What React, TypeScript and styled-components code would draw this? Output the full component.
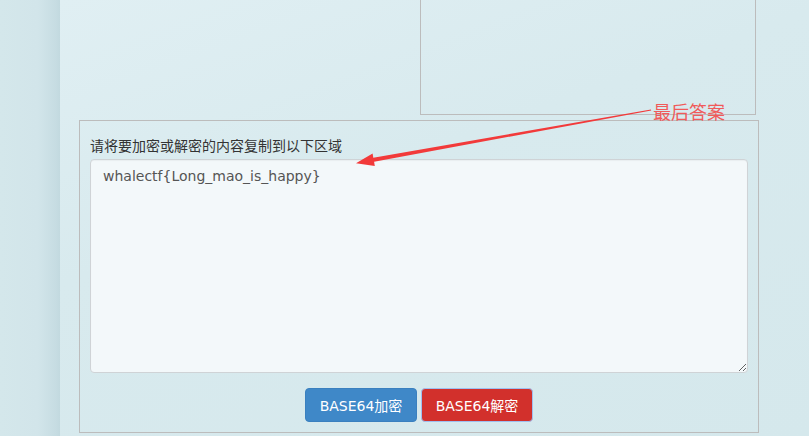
import React from 'react';
import styled, { createGlobalStyle } from 'styled-components';

const GlobalStyle = createGlobalStyle`
  html, body {
    margin: 0;
    padding: 0;
    background: #d4e7eb;
    font-family: "DejaVu Sans", "Noto Sans CJK SC", sans-serif;
    overflow: hidden;
  }
`;

const Page = styled.div`
  position: relative;
  display: flex;
  width: 809px;
  height: 436px;
  overflow: hidden;
`;

const Gutter = styled.div`
  width: 60px;
  flex-shrink: 0;
  background: linear-gradient(to right, #d4e7eb 0px, #d2e5ea 38px, #c6dce2 56px, #c2d9df 60px);
`;

const Main = styled.div`
  flex: 1;
  display: flex;
  flex-direction: column;
  background: linear-gradient(160deg, #e0eff3 0%, #d8eaee 40%, #d5e8ec 100%);
`;

const TopRow = styled.div`
  display: flex;
  padding-left: 360px;
`;

const PreviewBox = styled.div`
  width: 334px;
  height: 114px;
  border: 1px solid #bcbcbc;
  border-top: none;
`;

const Panel = styled.div`
  margin: 5px 0 0 19px;
  width: 680px;
  height: 313px;
  box-sizing: border-box;
  border: 1px solid #bcbcbc;
  padding: 14px 10px 0 10px;
  display: flex;
  flex-direction: column;
`;

const Label = styled.div`
  font-family: "Noto Sans CJK SC", sans-serif;
  font-size: 14px;
  line-height: 20px;
  color: #333;
  margin-bottom: 4px;
`;

const Area = styled.textarea`
  width: 658px;
  height: 214px;
  box-sizing: border-box;
  padding: 6px 12px;
  border: 1px solid #cfd3d6;
  border-radius: 4px;
  background: #f3f8fa;
  font-family: "DejaVu Sans", "Noto Sans CJK SC", sans-serif;
  font-size: 14px;
  line-height: 20px;
  color: #555;
  resize: vertical;
  outline: none;
  box-shadow: inset 0 1px 1px rgba(0, 0, 0, 0.04);
`;

const Actions = styled.div`
  display: flex;
  justify-content: center;
  gap: 4px;
  margin-top: 15px;
`;

const Button = styled.button<{ $tone: 'blue' | 'red' }>`
  width: 112px;
  height: 34px;
  border-radius: 4px;
  border: 1px solid ${(p) => (p.$tone === 'blue' ? '#3a80bf' : '#9fbff0')};
  background: ${(p) => (p.$tone === 'blue' ? '#3f88c8' : '#d2302c')};
  color: #fff;
  font-family: "DejaVu Sans", "Noto Sans CJK SC", sans-serif;
  font-size: 14px;
  padding: 0;
  cursor: pointer;
`;

const Note = styled.div`
  position: absolute;
  left: 653px;
  top: 99px;
  font-family: "Noto Sans CJK SC", sans-serif;
  font-size: 18px;
  line-height: 24px;
  color: #f05a5a;
`;

const Overlay = styled.svg`
  position: absolute;
  left: 0;
  top: 0;
  pointer-events: none;
`;

export default function App() {
  return (
    <>
      <GlobalStyle />
      <Page>
        <Gutter />
        <Main>
          <TopRow>
            <PreviewBox />
          </TopRow>
          <Panel>
            <Label>请将要加密或解密的内容复制到以下区域</Label>
            <Area defaultValue="whalectf{Long_mao_is_happy}" />
            <Actions>
              <Button $tone="blue">BASE64加密</Button>
              <Button $tone="red">BASE64解密</Button>
            </Actions>
          </Panel>
        </Main>
        <Note>最后答案</Note>
        <Overlay width="809" height="436" viewBox="0 0 809 436">
          <polygon
            fill="#f23a3a"
            points="651,109.4 651.2,110.4 374.1,161.8 374.8,166 356,163.2 372.6,153.6 373.3,157.8"
          />
        </Overlay>
      </Page>
    </>
  );
}
